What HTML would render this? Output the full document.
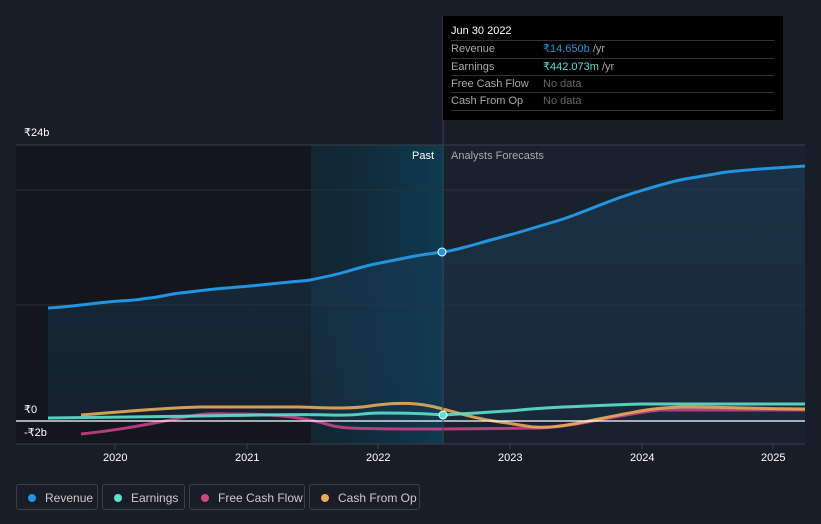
<!DOCTYPE html>
<html><head><style>
body{margin:0;background:#181d27;width:821px;height:524px;overflow:hidden;font-family:"Liberation Sans",sans-serif;position:relative}
.t{position:absolute;font-size:11px;color:#fff}
.tip{position:absolute;left:443px;top:16px;width:340px;height:104px;background:#000}
.tip .h{position:absolute;left:8px;top:9px;font-size:11px;color:#fff}
.row{position:absolute;left:8px;width:323px;height:17px;border-top:1px solid #333;font-size:11px;color:#aaa;line-height:17px}
.row span{position:absolute;left:92px}
.leg{position:absolute;top:484px;height:26px;border:1px solid #3a3f4a;border-radius:3px;font-size:12px;color:#ccc;line-height:26px;box-sizing:border-box}
.leg i{position:absolute;left:11px;top:9px;width:8px;height:8px;border-radius:50%}
.leg span{position:absolute;left:28px}
</style></head><body>
<svg width="821" height="524" style="position:absolute;left:0;top:0">
<defs>
<linearGradient id="hl" x1="0" x2="1"><stop offset="0" stop-color="#0e2a38" stop-opacity=".6"/><stop offset="1" stop-color="#0d3a50"/></linearGradient>
<linearGradient id="rf" x1="0" y1="0" x2="0" y2="1"><stop offset="0" stop-color="#1a3c58" stop-opacity=".8"/><stop offset="1" stop-color="#1a3c58" stop-opacity=".4"/></linearGradient>
</defs>
<rect x="16" y="145" width="295" height="299" fill="#13161c"/>
<rect x="311" y="145" width="132" height="299" fill="url(#hl)"/>
<rect x="443" y="145" width="362" height="299" fill="#19212d"/>
<line x1="16" y1="145" x2="805" y2="145" stroke="#3a3f4a"/>
<line x1="16" y1="190" x2="805" y2="190" stroke="#2a303a"/>
<line x1="16" y1="305" x2="805" y2="305" stroke="#2a303a"/>
<path d="M48,308 C80,306 100,302 120,301 S140,299 150,298 S170,294 180,293 S205,290 215,289 S240,287 250,286 S280,283 290,282 S305,281 310,280 S335,275 345,272 S365,266 375,264 S400,259 410,257 S435,253 443,252 S470,246 480,243 S510,235 520,232 S550,223 560,220 S590,209 600,205 S630,194 640,191 S670,182 680,180 S710,175 720,173 S750,170 760,169 L805,166 L805,421 L48,421Z" fill="url(#rf)" opacity=".7"/>
<path d="M48,308 C80,306 100,302 120,301 S140,299 150,298 S170,294 180,293 S205,290 215,289 S240,287 250,286 S280,283 290,282 S305,281 310,280 S335,275 345,272 S365,266 375,264 S400,259 410,257 S435,253 443,252 S470,246 480,243 S510,235 520,232 S550,223 560,220 S590,209 600,205 S630,194 640,191 S670,182 680,180 S710,175 720,173 S750,170 760,169 L805,166" fill="none" stroke="#2394df" stroke-width="3"/>
<path d="M81,434 C120,430 150,424 180,418 S215,414 240,414 S290,416 310,420 S330,427 350,428 S420,429 443,429 L540,428 C580,426 620,414 660,410 L805,410" fill="none" stroke="#d0448a" stroke-width="3" opacity=".85"/>
<path d="M81,415 C120,412 160,408 200,407 L300,407 C330,408 350,409 370,406 S410,402 430,406 S470,418 500,422 S530,428 550,427 S600,418 640,411 S700,408 805,409" fill="none" stroke="#e9aa5a" stroke-width="3" opacity=".9"/>
<path d="M48,418 L200,416 C260,415 300,414 330,415 S360,413 380,413 S420,413 443,415 C470,413 500,412 520,410 S580,406 640,404 L805,404" fill="none" stroke="#5ee0cf" stroke-width="3" opacity=".9"/>
<line x1="16" y1="421" x2="805" y2="421" stroke="#fff" stroke-width="1.3"/>
<line x1="16" y1="444" x2="805" y2="444" stroke="#3a3f4a"/>
<line x1="443" y1="16" x2="443" y2="444" stroke="#2f4a5a"/>
<g stroke="#3a3f4a"><line x1="115" y1="444" x2="115" y2="449"/><line x1="247" y1="444" x2="247" y2="449"/><line x1="378" y1="444" x2="378" y2="449"/><line x1="510" y1="444" x2="510" y2="449"/><line x1="642" y1="444" x2="642" y2="449"/><line x1="773" y1="444" x2="773" y2="449"/></g>
<circle cx="442" cy="252" r="4" fill="#2394df" stroke="#fff" stroke-width="1"/>
<circle cx="443" cy="415" r="4" fill="#5ee0cf" stroke="#fff" stroke-width="1"/>
</svg>
<div class="t" style="left:24px;top:126px">₹24b</div>
<div class="t" style="left:24px;top:403px">₹0</div>
<div class="t" style="left:24px;top:426px">-₹2b</div>
<div class="t" style="left:412px;top:150px">Past</div>
<div class="t" style="left:451px;top:150px;color:#aaa">Analysts Forecasts</div>
<div class="t" style="left:103px;top:452px">2020</div>
<div class="t" style="left:235px;top:452px">2021</div>
<div class="t" style="left:366px;top:452px">2022</div>
<div class="t" style="left:498px;top:452px">2023</div>
<div class="t" style="left:630px;top:452px">2024</div>
<div class="t" style="left:761px;top:452px">2025</div>
<div class="tip"><div class="h">Jun 30 2022</div>
<div class="row" style="top:24px">Revenue<span><b style="font-weight:normal;color:#2394df">₹14.650b</b> /yr</span></div>
<div class="row" style="top:42px">Earnings<span><b style="font-weight:normal;color:#5ee0cf">₹442.073m</b> /yr</span></div>
<div class="row" style="top:59px">Free Cash Flow<span style="color:#666">No data</span></div>
<div class="row" style="top:76px;border-bottom:1px solid #333">Cash From Op<span style="color:#666">No data</span></div>
</div>
<div class="leg" style="left:16px;width:82px"><i style="background:#2394df"></i><span>Revenue</span></div>
<div class="leg" style="left:102px;width:83px"><i style="background:#5ee0cf"></i><span>Earnings</span></div>
<div class="leg" style="left:189px;width:116px"><i style="background:#d0448a"></i><span>Free Cash Flow</span></div>
<div class="leg" style="left:309px;width:111px"><i style="background:#e9aa5a"></i><span>Cash From Op</span></div>
</body></html>
